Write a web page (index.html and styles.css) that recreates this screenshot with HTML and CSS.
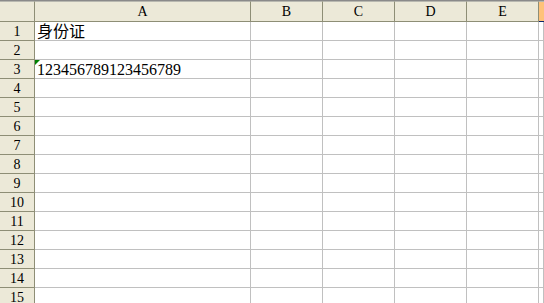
FILE: index.html
```html
<!DOCTYPE html>
<html lang="zh-CN">
  <head>
    <meta charset="UTF-8" />
    <title>Sheet1</title>
    <link rel="stylesheet" href="styles.css">
  </head>
  <body>
    <div id="sheet">
      <!-- column headers -->
      <div class="corner"></div>
      <div class="colhead">A</div>
      <div class="colhead">B</div>
      <div class="colhead">C</div>
      <div class="colhead">D</div>
      <div class="colhead">E</div>
      <div class="colhead selected"></div>
    </div>

    <script>
      const sheet = document.getElementById("sheet");
      const data = {
        1: "身份证",
        3: "123456789123456789",
      };

      for (let r = 1; r <= 15; r++) {
        const head = document.createElement("div");
        head.className = "rowhead";
        head.textContent = r;
        sheet.appendChild(head);

        for (let c = 0; c < 6; c++) {
          const cell = document.createElement("div");
          cell.className = "cell";
          if (c === 0 && data[r]) {
            cell.textContent = data[r];
          }
          // number stored as text marker
          if (c === 0 && r === 3) {
            const flag = document.createElement("span");
            flag.className = "flag";
            cell.appendChild(flag);
          }
          sheet.appendChild(cell);
        }
      }
    </script>
  </body>
</html>
```

FILE: styles.css
```css
body {
  margin: 0;
  padding: 0;
  background-color: #ffffff;
  overflow: hidden;
}
#sheet {
  display: grid;
  grid-template-columns: 35px 216px 72px 72px 72px 72px 1fr;
  grid-template-rows: 21px;
  grid-auto-rows: 19px;
  border-top: 1px solid #8a8a8a;
  font-family: "Liberation Serif", "Noto Sans CJK SC", serif;
}
.corner,
.colhead {
  box-sizing: border-box;
  background-color: #ece9d8;
  border-top: 1px solid #b8b8b0;
  border-right: 1px solid #8e8e76;
  border-bottom: 1px solid #8e8e76;
  font-size: 14px;
  line-height: 19px;
  text-align: center;
  color: #000;
}
.colhead.selected {
  background-color: #ffc279;
  border-right: none;
  border-bottom: 1px solid #0a246a;
}
.rowhead {
  box-sizing: border-box;
  background-color: #ece9d8;
  border-right: 1px solid #8e8e76;
  border-bottom: 1px solid #8e8e76;
  font-size: 14px;
  line-height: 20px;
  text-align: center;
  color: #000;
}
.cell {
  box-sizing: border-box;
  position: relative;
  border-right: 1px solid #c0c0c0;
  border-bottom: 1px solid #c0c0c0;
  padding-left: 2px;
  font-size: 16px;
  line-height: 20px;
  white-space: nowrap;
  color: #000;
}
.flag {
  position: absolute;
  top: 0;
  left: 0;
  width: 0;
  height: 0;
  border-top: 5px solid #008000;
  border-right: 5px solid transparent;
}
```
